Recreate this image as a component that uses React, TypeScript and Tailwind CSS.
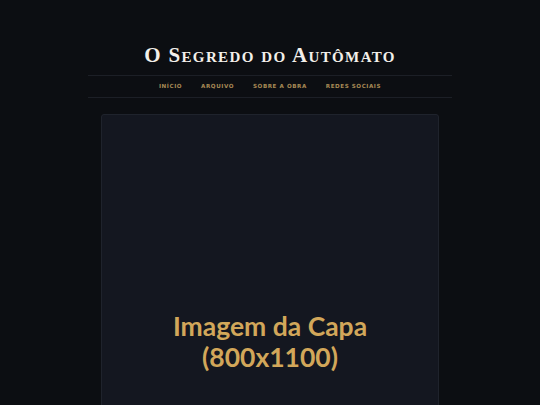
export default function App() {
  const links = ['Início', 'Arquivo', 'Sobre a Obra', 'Redes Sociais'];

  return (
    <div className="min-h-screen bg-[#0c0e12] font-['Lato',sans-serif]">
      <div className="mx-auto w-[364px] pt-[42px]">
        {/* Title */}
        <h1 className="text-center font-['Liberation_Serif',serif] text-[21px] font-bold tracking-[0.065em] text-[#f3f0ea] [font-variant:small-caps] leading-[26px]">
          O Segredo do Autômato
        </h1>

        {/* Nav */}
        <nav className="mt-[7px] flex h-[23px] items-center justify-center gap-[19px] border-y border-[#1c1f26]">
          {links.map((l) => (
            <a
              key={l}
              className="font-['DejaVu_Sans',sans-serif] text-[5.6px] font-bold uppercase tracking-[0.1em] text-[#a88a55]"
            >
              {l}
            </a>
          ))}
        </nav>

        {/* Cover */}
        <div className="mx-[13px] mt-[16px] flex aspect-[8/11] items-center justify-center rounded-[3px] border border-[#1f232c] bg-[#141720] pb-[8px]">
          <p className="text-center text-[26.5px] font-bold leading-[31px] text-[#d2a75a]">
            Imagem da Capa
            <br />
            (800x1100)
          </p>
        </div>
      </div>
    </div>
  );
}
